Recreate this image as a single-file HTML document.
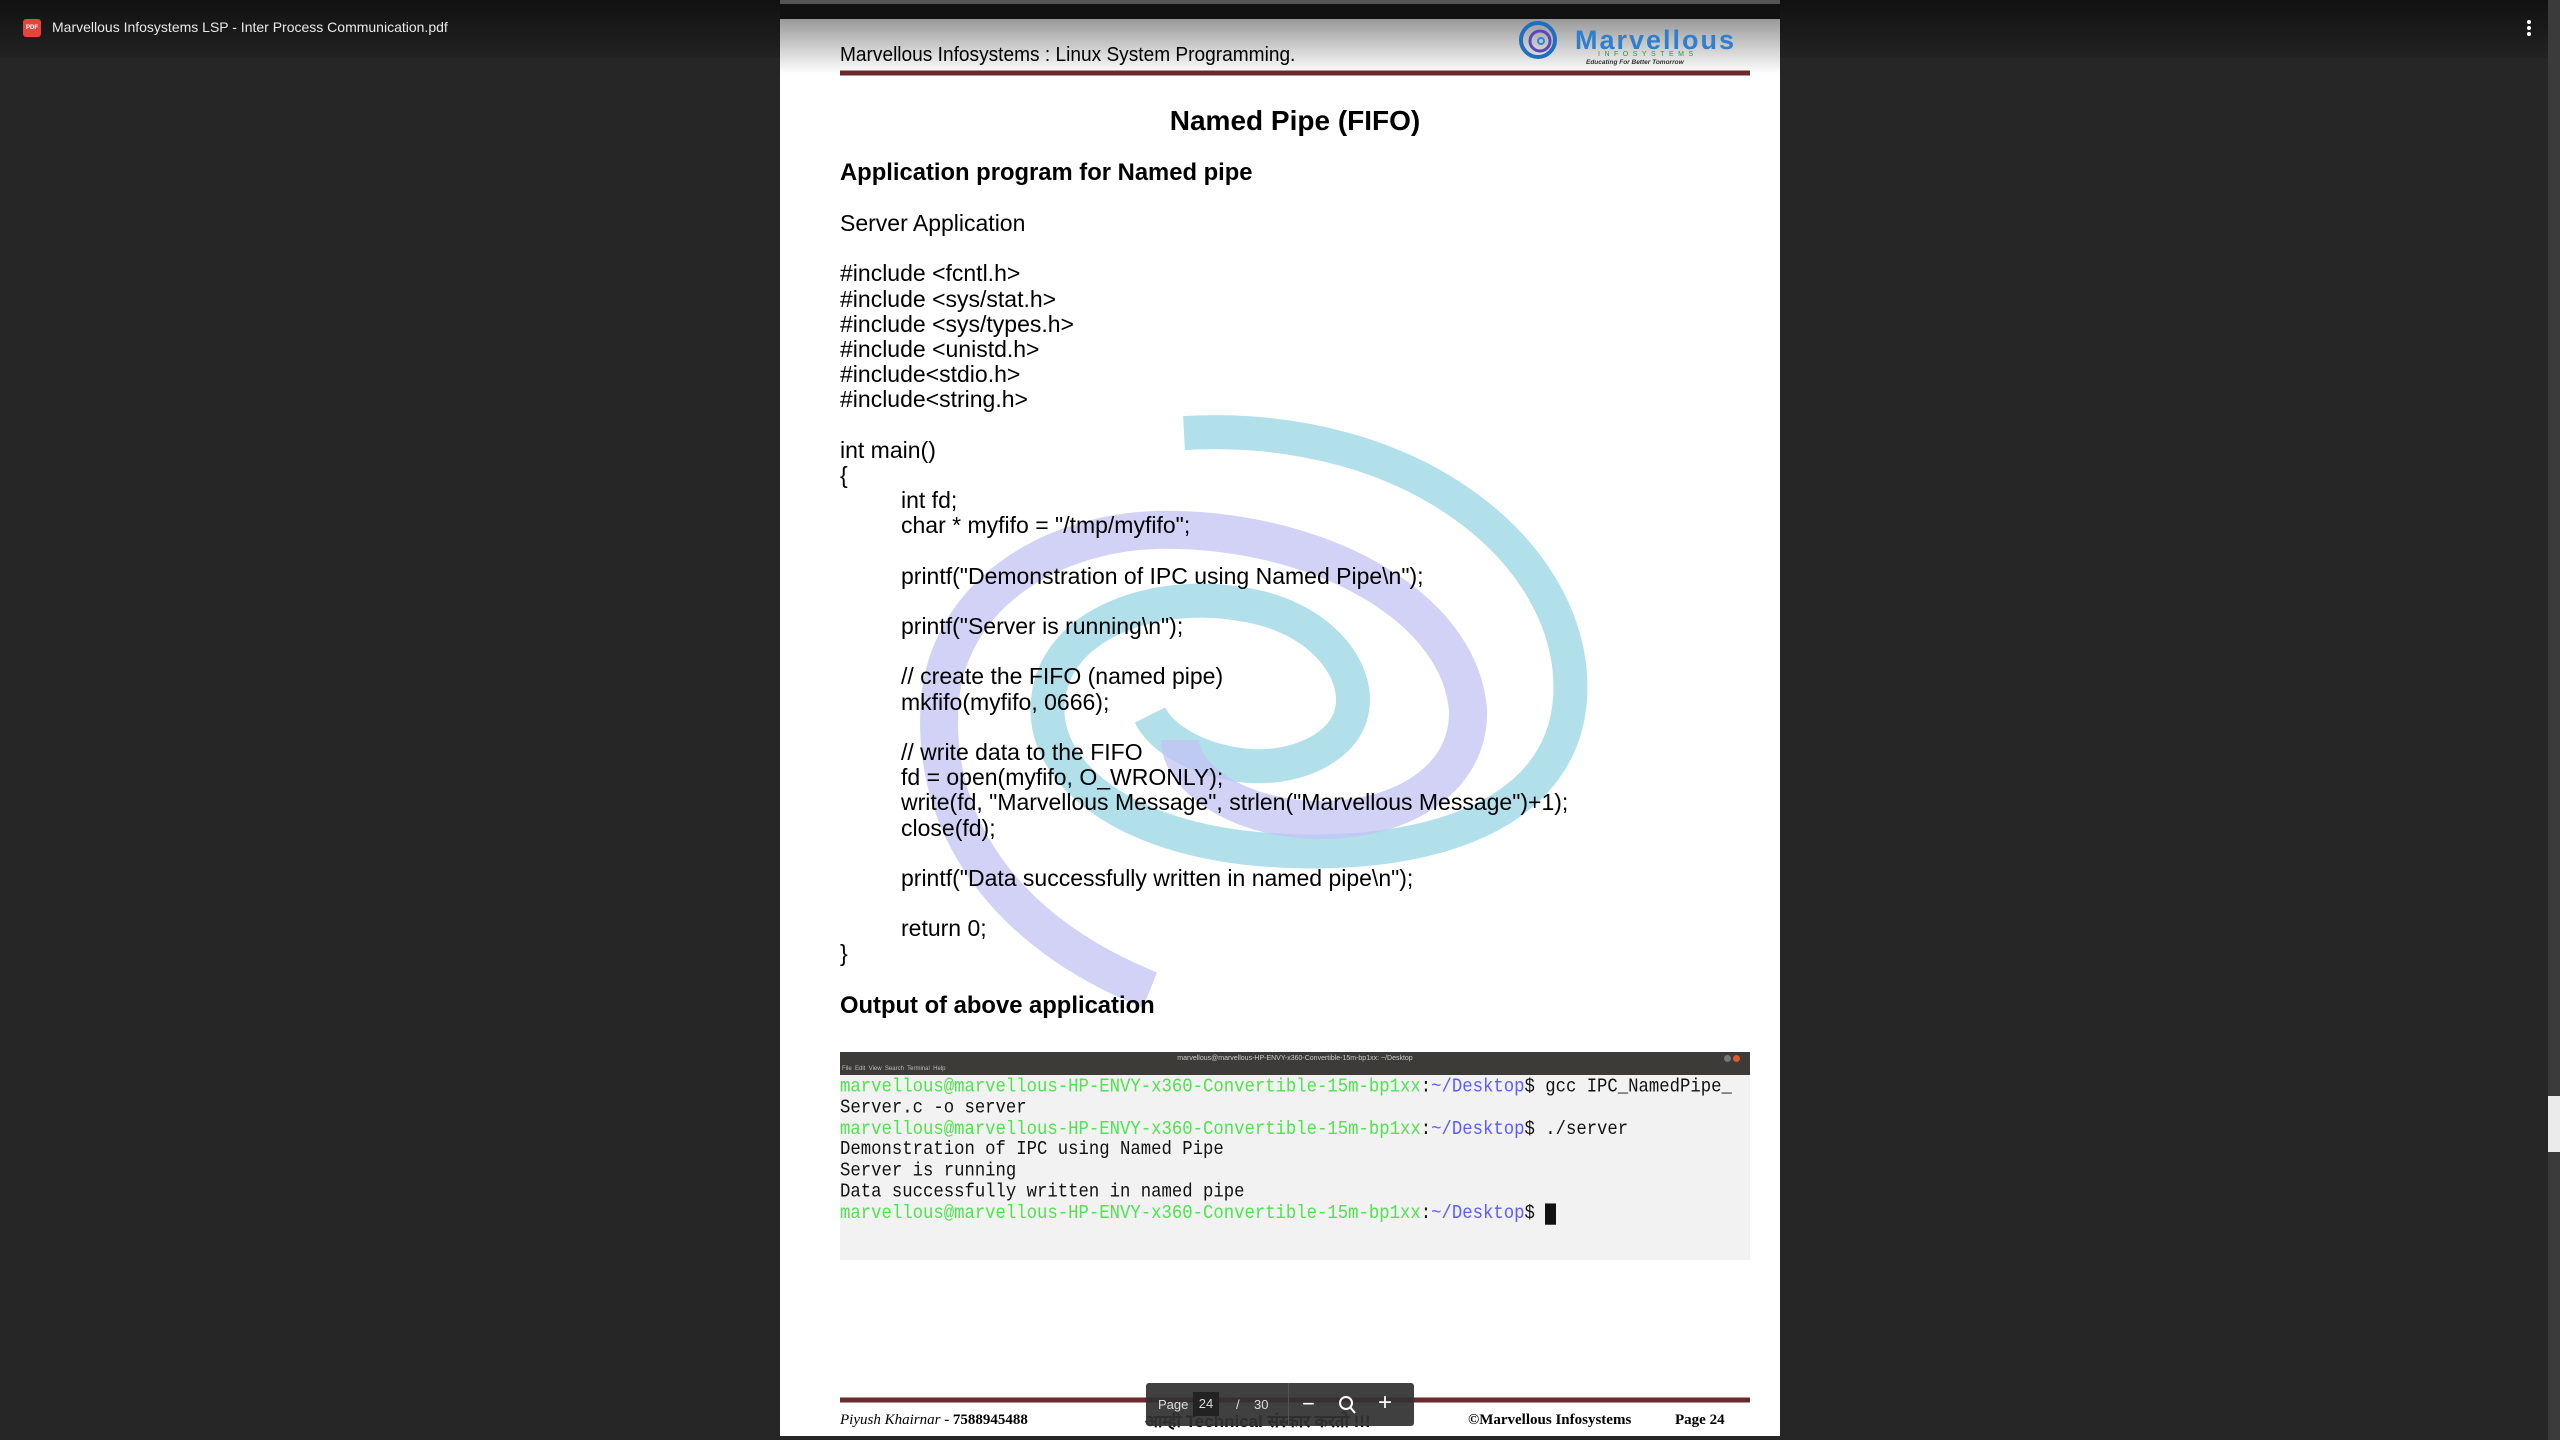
<!DOCTYPE html>
<html><head><meta charset="utf-8"><style>
*{margin:0;padding:0;box-sizing:border-box}
body{width:2560px;height:1440px;background:#262626;position:relative;overflow:hidden;font-family:"Liberation Sans",sans-serif}
.top{position:absolute;left:0;top:0;width:2548px;height:58px;background:linear-gradient(#111,#222)}
.ttl{position:absolute;left:52px;top:19px;color:#e8e8e8;font-size:14px}
.pdf{position:absolute;left:23px;top:19px;width:18px;height:18px;background:#e2453c;border-radius:3px;color:#fff;font-size:6px;font-weight:bold;text-align:center;line-height:18px}
.dots{position:absolute;left:2527px;top:20px;width:4px}
.dots i{display:block;width:4px;height:4px;background:#fff;border-radius:50%;margin-bottom:2px}
.sb{position:absolute;left:2548px;top:0;width:12px;height:1440px;background:#3b3b3b}
.thumb{position:absolute;left:2548px;top:1096px;width:12px;height:56px;background:#ebebeb}
.page{position:absolute;left:780px;top:19px;width:1000px;height:1417px;background:#fff;overflow:hidden}
.hdrfade{position:absolute;left:0;top:0;width:1000px;height:55px;background:linear-gradient(#999,#fff)}
.abs{position:absolute;white-space:pre}
.b{font-weight:bold}
.code{font-size:23px;color:#000;line-height:25.2px}
.term{position:absolute;left:60px;top:1033px;width:910px;height:208px;background:#f2f2f2}
.tbar{position:absolute;left:0;top:0;width:910px;height:23px;background:#3c3b37}
.tl{font-family:"Liberation Mono",monospace;font-size:17.3px;line-height:18.8px;color:#111;position:absolute;left:0;top:26px;white-space:pre;transform:scaleY(1.12);transform-origin:0 0}
.g{color:#4fe34f}.bl{color:#5b5bff}
.tool{position:absolute;left:1146px;top:1383px;width:268px;height:43px;background:rgba(50,50,50,.93);border-radius:3px;color:#ddd;font-size:13px}
</style></head><body>
<div class="top"></div>
<div class="pdf">PDF</div>
<div class="ttl">Marvellous Infosystems LSP - Inter Process Communication.pdf</div>
<div class="dots"><i></i><i></i><i></i></div>
<div class="sb"></div><div class="thumb"></div>
<div style="position:absolute;left:780px;top:0;width:1000px;height:4px;background:#555"></div>
<div style="position:absolute;left:780px;top:4px;width:1000px;height:15px;background:#111"></div>
<div class="page">
  <div class="hdrfade"></div>
  <svg class="abs" style="left:0;top:0" width="1000" height="1417">
    <path d="M404,414 C640,401 800,541 790,681 C780,801 640,841 490,831 C340,821 260,751 268,681 C276,601 380,571 460,585 C540,596 580,651 572,691 C565,731 510,753 460,746 C410,739 380,716 370,696" fill="none" stroke="#a3dbe8" stroke-width="34" stroke-linecap="butt" opacity=".85"/>
    <path d="M370,971 C220,911 150,801 160,681 C170,571 280,506 400,511 C550,516 680,591 688,691 C690,771 600,811 510,799 C440,789 400,751 400,721" fill="none" stroke="#c3c3f3" stroke-width="38" stroke-linecap="butt" opacity=".75"/>
    <line x1="60" y1="54" x2="970" y2="54" stroke="#6a2a2c" stroke-width="5"/>
    <line x1="60" y1="1381" x2="970" y2="1381" stroke="#6a2a2c" stroke-width="5"/>
    <circle cx="758" cy="21" r="17" fill="none" stroke="#1f6fc0" stroke-width="4"/>
    <circle cx="760" cy="22" r="10" fill="none" stroke="#5a48b8" stroke-width="3"/>
    <circle cx="761" cy="22" r="3" fill="none" stroke="#2a8ad8" stroke-width="2"/>
  </svg>
  <div class="abs" style="left:795px;top:6px;font-size:27px;font-weight:bold;color:#2f7fd0;letter-spacing:2px">Marvellous</div>
  <div class="abs" style="left:818px;top:32px;font-size:7px;color:#2a9a3a;letter-spacing:4.5px">INFOSYSTEMS</div>
  <div class="abs" style="left:806px;top:40px;font-size:6.5px;font-style:italic;font-weight:bold;color:#333">Educating For Better Tomorrow</div>
  <div class="abs" style="left:60px;top:25px;font-size:20px;color:#000;transform:scaleX(.955);transform-origin:0 0">Marvellous Infosystems : Linux System Programming.</div>
  <div class="abs b" style="left:15px;width:1000px;text-align:center;top:86px;font-size:28px">Named Pipe (FIFO)</div>
  <div class="abs b" style="left:60px;top:140px;font-size:23.8px">Application program for Named pipe</div>
  <div class="abs code" style="left:60px;top:192px">Server Application

#include &lt;fcntl.h&gt;
#include &lt;sys/stat.h&gt;
#include &lt;sys/types.h&gt;
#include &lt;unistd.h&gt;
#include&lt;stdio.h&gt;
#include&lt;string.h&gt;

int main()
{</div>
  <div class="abs code" style="left:121px;top:469px">int fd;
char * myfifo = "/tmp/myfifo";

printf("Demonstration of IPC using Named Pipe\n");

printf("Server is running\n");

// create the FIFO (named pipe)
mkfifo(myfifo, 0666);

// write data to the FIFO
fd = open(myfifo, O_WRONLY);
write(fd, "Marvellous Message", strlen("Marvellous Message")+1);
close(fd);

printf("Data successfully written in named pipe\n");

return 0;</div>
  <div class="abs code" style="left:60px;top:922px">}</div>
  <div class="abs b" style="left:60px;top:973px;font-size:23.8px">Output of above application</div>
  <div class="term">
    <div class="tbar"><div class="abs" style="left:0;width:910px;text-align:center;top:3px;font-size:7px;color:#ccc">marvellous@marvellous-HP-ENVY-x360-Convertible-15m-bp1xx: ~/Desktop</div><div class="abs" style="left:2px;top:14px;font-size:6px;color:#bbb">File  Edit  View  Search  Terminal  Help</div><div class="abs" style="left:884px;top:3px;width:7px;height:7px;border-radius:50%;background:#777"></div><div class="abs" style="left:893px;top:3px;width:7px;height:7px;border-radius:50%;background:#e05a2a"></div></div>
    <div class="tl"><span class="g">marvellous@marvellous-HP-ENVY-x360-Convertible-15m-bp1xx</span>:<span class="bl">~/Desktop</span>$ gcc IPC_NamedPipe_
Server.c -o server
<span class="g">marvellous@marvellous-HP-ENVY-x360-Convertible-15m-bp1xx</span>:<span class="bl">~/Desktop</span>$ ./server
Demonstration of IPC using Named Pipe
Server is running
Data successfully written in named pipe
<span class="g">marvellous@marvellous-HP-ENVY-x360-Convertible-15m-bp1xx</span>:<span class="bl">~/Desktop</span>$ <span style="background:#111">&nbsp;</span></div>
  </div>
  <div class="abs" style="left:60px;top:1393px;font-family:'Liberation Serif',serif;font-size:15px"><i>Piyush Khairnar</i> <b>- 7588945488</b></div>
  <div class="abs b" style="left:365px;top:1390px;font-size:17px;font-family:'Liberation Sans','Noto Sans CJK SC',sans-serif">आम्ही Technical संस्कार करतो !!!</div>
  <div class="abs b" style="left:688px;top:1393px;font-family:'Liberation Serif',serif;font-size:15px">©Marvellous Infosystems</div>
  <div class="abs b" style="left:895px;top:1393px;font-family:'Liberation Serif',serif;font-size:15px">Page 24</div>
</div>
<div class="tool">
  <span class="abs" style="left:12px;top:14px">Page</span>
  <span class="abs" style="left:47px;top:9px;width:26px;height:24px;background:#222;text-align:center;line-height:24px">24</span>
  <span class="abs" style="left:90px;top:14px">/</span>
  <span class="abs" style="left:108px;top:14px">30</span>
  <div class="abs" style="left:142px;top:0;width:1px;height:43px;background:#555"></div>
  <span class="abs" style="left:156px;top:8px;font-size:22px;color:#fff">−</span>
  <svg class="abs" style="left:192px;top:12px" width="18" height="20"><circle cx="8" cy="8" r="6" fill="none" stroke="#fff" stroke-width="2"/><line x1="12" y1="12" x2="17" y2="18" stroke="#fff" stroke-width="2"/></svg>
  <span class="abs" style="left:232px;top:6px;font-size:24px;color:#fff">+</span>
</div>
</body></html>
